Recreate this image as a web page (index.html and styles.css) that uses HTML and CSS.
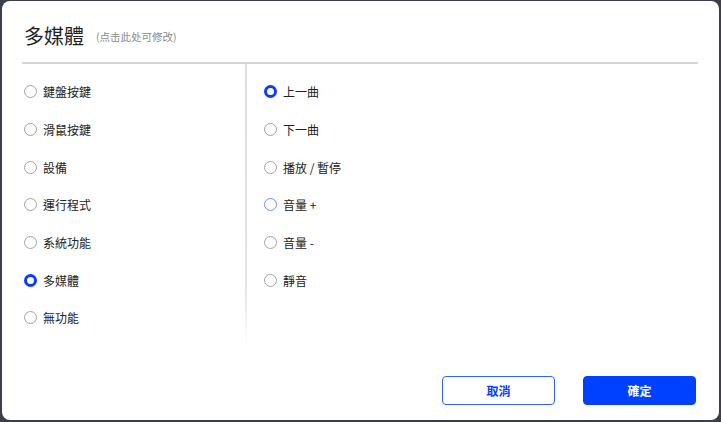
FILE: index.html
```html
<!DOCTYPE html>
<html>
<head>
  <meta charset="utf-8">
  <link rel="stylesheet" href="styles.css">
</head>
<body>
  <div class="dialog">
    <div class="dialog-header">
      <div class="title">多媒體</div>
      <div class="title-hint">(点击此处可修改)</div>
    </div>
    <div class="divider"></div>

    <div class="dialog-body">
      <div class="column column-left">
        <label class="option"><span class="radio"></span>鍵盤按鍵</label>
        <label class="option"><span class="radio"></span>滑鼠按鍵</label>
        <label class="option"><span class="radio"></span>設備</label>
        <label class="option"><span class="radio"></span>運行程式</label>
        <label class="option"><span class="radio"></span>系統功能</label>
        <label class="option"><span class="radio checked"></span>多媒體</label>
        <label class="option"><span class="radio"></span>無功能</label>
      </div>
      <div class="column column-right">
        <label class="option"><span class="radio checked"></span>上一曲</label>
        <label class="option"><span class="radio"></span>下一曲</label>
        <label class="option"><span class="radio"></span>播放 / 暫停</label>
        <label class="option"><span class="radio hover"></span>音量 +</label>
        <label class="option"><span class="radio"></span>音量 -</label>
        <label class="option"><span class="radio"></span>靜音</label>
      </div>
    </div>

    <div class="dialog-footer">
      <button class="btn btn-cancel">取消</button>
      <button class="btn btn-ok">確定</button>
    </div>
  </div>
</body>
</html>
```

FILE: styles.css
```css
html, body {
  height: 100%;
}

body {
  margin: 0;
  padding: 1px 2px 2px 2px;
  box-sizing: border-box;
  background: #3a3f4a;
  font-family: "Noto Sans CJK TC", "Noto Sans", sans-serif;
  color: #222;
}

.dialog {
  height: 100%;
  background: #fff;
  border-radius: 8px;
  display: flex;
  flex-direction: column;
}

.dialog-header {
  height: 24px;
  display: flex;
  align-items: center;
  padding: 23px 0 14px 22px;
  gap: 12px;
}

.title {
  font-size: 20px;
  line-height: 24px;
  color: #222;
}

.title-hint {
  font-size: 10.5px;
  color: #8a8a8a;
}

.divider {
  height: 2px;
  background: #d6d6d6;
  margin: 0 21px 0 20px;
}

.dialog-body {
  display: flex;
  height: 282px;
}

.column {
  display: flex;
  flex-direction: column;
  padding-top: 9px;
}

.column-left {
  width: 223px;
  padding-left: 2px;
  box-sizing: border-box;
  margin-left: 20px;
}

.column-right {
  flex: 1;
  padding-left: 17px;
  border-left: 2px solid transparent;
  border-image: linear-gradient(to bottom, #dcdcdc 0%, #e6e6e6 80%, #ffffff 100%) 1;
}

.option {
  height: 37.7px;
  display: flex;
  align-items: center;
  gap: 6px;
  font-size: 12px;
  color: #222;
}

.radio {
  width: 13px;
  height: 13px;
  box-sizing: border-box;
  border: 1.5px solid #a3a3a3;
  border-radius: 50%;
  flex-shrink: 0;
}

.radio.checked {
  border: 3.5px solid #0a3cff;
}

.radio.hover {
  border-color: #6f8dff;
}

.dialog-footer {
  flex: 1;
  display: flex;
  justify-content: flex-end;
  align-items: flex-end;
  gap: 28px;
  padding: 0 23px 15px 0;
}

.btn {
  width: 113px;
  height: 29px;
  border-radius: 4px;
  font-family: "Noto Sans CJK TC", "Noto Sans", sans-serif;
  font-size: 12px;
  font-weight: 700;
  cursor: pointer;
}

.btn-cancel {
  background: #fff;
  border: 1px solid #2f62ff;
  color: #0a3cff;
}

.btn-ok {
  background: #0040ff;
  border: 1px solid #0040ff;
  color: #fff;
}
```
